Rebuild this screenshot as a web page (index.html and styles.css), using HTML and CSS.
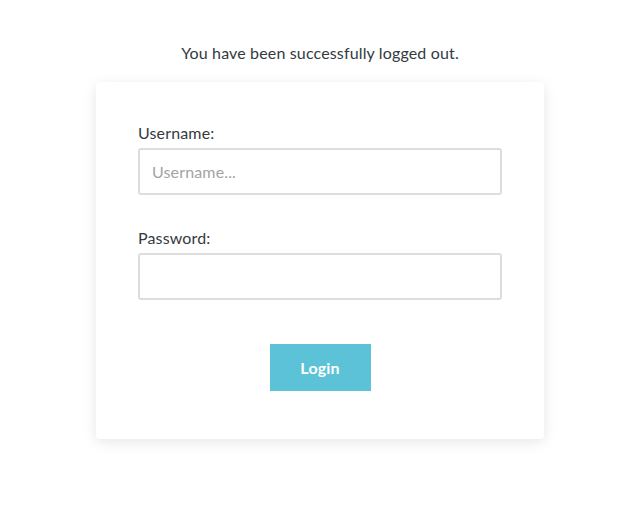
FILE: index.html
```html
<!DOCTYPE html>
<html>
<head>
<meta charset="utf-8">
<link rel="stylesheet" href="styles.css">
</head>
<body>
<div class="page">
  <p class="message">You have been successfully logged out.</p>
  <form class="card">
    <div class="field">
      <label class="label" for="u">Username:</label>
      <input class="input" id="u" type="text" placeholder="Username...">
    </div>
    <div class="field">
      <label class="label" for="p">Password:</label>
      <input class="input" id="p" type="password">
    </div>
    <div class="actions">
      <button class="button" type="button">Login</button>
    </div>
  </form>
</div>
</body>
</html>
```
FILE: styles.css
```css
html, body {
  margin: 0;
  padding: 0;
  background: #fff;
}
body {
  font-family: "Lato", "Open Sans", sans-serif;
  color: #343a40;
  font-size: 16px;
  letter-spacing: 0.15px;
}
.page {
  display: flex;
  flex-direction: column;
  align-items: center;
  padding-top: 42px;
  min-height: 100vh;
  box-sizing: border-box;
}
.message {
  margin: 0 0 18px;
  line-height: 22px;
}
.card {
  width: 448px;
  box-sizing: border-box;
  padding: 40px 42px 48px;
  background: #fff;
  border-radius: 4px;
  box-shadow: 0 3px 14px rgba(0,0,0,0.1);
  display: flex;
  flex-direction: column;
}
.field {
  display: flex;
  flex-direction: column;
  margin-bottom: 32px;
}
.field + .field {
  margin-bottom: 44px;
}
.label {
  line-height: 22px;
  margin-bottom: 4px;
}
.input {
  box-sizing: border-box;
  height: 47px;
  width: 100%;
  border: 2px solid #dddddd;
  border-radius: 3px;
  padding: 0 12px;
  font-family: inherit;
  font-size: 16px;
  letter-spacing: 0.15px;
  color: #343a40;
  outline: none;
}
.input::placeholder {
  color: #a3a3a3;
}
.actions {
  display: flex;
  justify-content: center;
}
.button {
  width: 101px;
  height: 47px;
  border: none;
  border-radius: 0;
  background: #5bc2d7;
  color: #fff;
  font-family: inherit;
  font-weight: 700;
  font-size: 16px;
  letter-spacing: 0.15px;
}
```
